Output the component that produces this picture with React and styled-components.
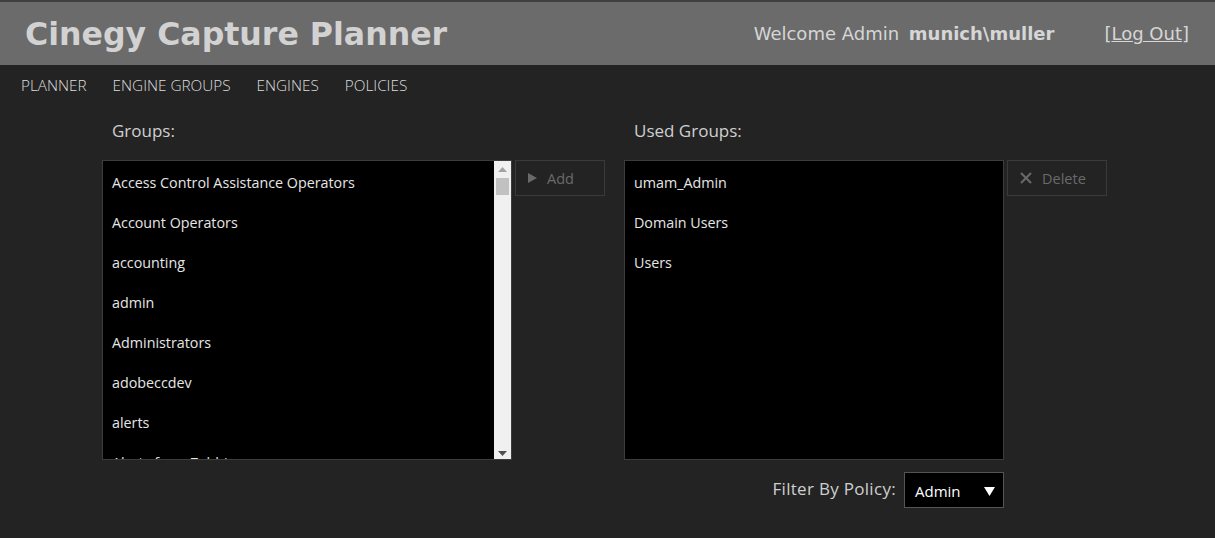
import styled, { createGlobalStyle } from 'styled-components';

const groups = [
  'Access Control Assistance Operators',
  'Account Operators',
  'accounting',
  'admin',
  'Administrators',
  'adobeccdev',
  'alerts',
  'Alerts from Zabbix',
];

const usedGroups = ['umam_Admin', 'Domain Users', 'Users'];

const GlobalStyle = createGlobalStyle`
  html, body {
    margin: 0;
    padding: 0;
    background: #232323;
    overflow: hidden;
  }
`;

export default function App() {
  return (
    <Page>
      <GlobalStyle />
      <Header>
        <Title>Cinegy Capture Planner</Title>
        <UserInfo>
          Welcome Admin <UserName>munich\muller</UserName>
        </UserInfo>
        <LogOut>
          [<LogOutLink href="#">Log Out</LogOutLink>]
        </LogOut>
      </Header>
      <Nav>
        <NavItem>PLANNER</NavItem>
        <NavItem>ENGINE GROUPS</NavItem>
        <NavItem>ENGINES</NavItem>
        <NavItem>POLICIES</NavItem>
      </Nav>
      <Main>
        <Column>
          <Label>Groups:</Label>
          <Row>
            <ListBox $width={410}>
              <Items>
                {groups.map((g) => (
                  <Item key={g}>{g}</Item>
                ))}
              </Items>
              <Scrollbar>
                <ScrollArrow viewBox="0 0 9 5">
                  <path d="M0 5 L4.5 0 L9 5 Z" fill="#a3a3a3" />
                </ScrollArrow>
                <Thumb />
                <Spacer />
                <ScrollArrow viewBox="0 0 9 5">
                  <path d="M0 0 L4.5 5 L9 0 Z" fill="#505050" />
                </ScrollArrow>
              </Scrollbar>
            </ListBox>
            <ActionButton $width={90}>
              <svg width="9" height="10" viewBox="0 0 9 10">
                <path d="M0 0 L9 5 L0 10 Z" fill="#6a6a6a" />
              </svg>
              Add
            </ActionButton>
          </Row>
        </Column>
        <Column>
          <Label>Used Groups:</Label>
          <Row>
            <ListBox $width={380}>
              <Items>
                {usedGroups.map((g) => (
                  <Item key={g}>{g}</Item>
                ))}
              </Items>
            </ListBox>
            <ActionButton $width={100}>
              <svg width="12" height="12" viewBox="0 0 12 12">
                <path d="M1 1 L11 11 M11 1 L1 11" stroke="#6a6a6a" strokeWidth="2" />
              </svg>
              Delete
            </ActionButton>
          </Row>
          <FilterRow>
            <FilterLabel>Filter By Policy:</FilterLabel>
            <Select>
              Admin
              <svg width="11" height="9" viewBox="0 0 11 9">
                <path d="M0 0 L11 0 L5.5 9 Z" fill="#ffffff" />
              </svg>
            </Select>
          </FilterRow>
        </Column>
      </Main>
    </Page>
  );
}

// Styled Components
const Page = styled.div`
  width: 1215px;
  height: 538px;
  background: #232323;
  font-family: 'Open Sans', 'Noto Sans', sans-serif;
`;

const Header = styled.header`
  height: 63px;
  border-top: 2px solid #3f3f3f;
  background: #6b6b6b;
  display: flex;
  align-items: center;
  padding: 0 26px 0 25px;
`;

const Title = styled.h1`
  margin: 0;
  flex: 1;
  font-family: 'DejaVu Sans', Verdana, sans-serif;
  font-weight: bold;
  font-size: 31.6px;
  color: #d2d2d2;
`;

const UserInfo = styled.div`
  font-family: 'DejaVu Sans', Verdana, sans-serif;
  font-size: 18px;
  color: #d6d6d6;
  margin-right: 50px;
`;

const UserName = styled.b`
  margin-left: 4px;
`;

const LogOut = styled.div`
  font-family: 'DejaVu Sans', Verdana, sans-serif;
  font-size: 18px;
  color: #d6d6d6;
`;

const LogOutLink = styled.a`
  color: #d6d6d6;
  text-decoration: underline;
`;

const Nav = styled.nav`
  display: flex;
  gap: 26px;
  padding: 0 21px;
  height: 40px;
  align-items: center;
`;

const NavItem = styled.span`
  font-size: 15.3px;
  font-weight: 300;
  color: #dcdcdc;
`;

const Main = styled.main`
  display: flex;
  gap: 19px;
  padding-left: 102px;
`;

const Column = styled.div`
  display: flex;
  flex-direction: column;
`;

const Label = styled.div`
  font-size: 17px;
  color: #cfcfcf;
  padding-left: 10px;
  height: 55px;
  line-height: 52px;
`;

const Row = styled.div`
  display: flex;
  align-items: flex-start;
  gap: 3px;
`;

const ListBox = styled.div`
  width: ${(p) => p.$width}px;
  height: 300px;
  box-sizing: border-box;
  background: #000;
  border: 1px solid #3c3c3c;
  display: flex;
  overflow: hidden;
`;

const Items = styled.div`
  flex: 1;
  padding-top: 2px;
  overflow: hidden;
`;

const Item = styled.div`
  height: 40px;
  line-height: 40px;
  padding-left: 9px;
  font-size: 14.3px;
  color: #e6e6e6;
  white-space: nowrap;
`;

const Scrollbar = styled.div`
  width: 17px;
  background: #f0f0f0;
  display: flex;
  flex-direction: column;
  align-items: center;
  padding: 6px 0 3px;
  box-sizing: border-box;
`;

const ScrollArrow = styled.svg`
  width: 9px;
  height: 5px;
`;

const Thumb = styled.div`
  width: 13px;
  height: 17px;
  margin-top: 6px;
  background: #c1c1c1;
`;

const Spacer = styled.div`
  flex: 1;
`;

const ActionButton = styled.button`
  width: ${(p) => p.$width}px;
  height: 36px;
  box-sizing: border-box;
  background: #232323;
  border: 1px solid #3a3a3a;
  color: #6a6a6a;
  font-family: 'Open Sans', 'Noto Sans', sans-serif;
  font-size: 14.5px;
  display: flex;
  align-items: center;
  gap: 10px;
  padding: 0 0 0 12px;
`;

const FilterRow = styled.div`
  display: flex;
  justify-content: flex-end;
  align-items: center;
  gap: 8px;
  margin-top: 12px;
  width: 380px;
`;

const FilterLabel = styled.span`
  font-size: 17px;
  letter-spacing: 0.3px;
  color: #cfcfcf;
  padding-bottom: 4px;
`;

const Select = styled.div`
  width: 100px;
  height: 36px;
  box-sizing: border-box;
  background: #000;
  border: 1px solid #555;
  color: #fff;
  font-size: 15px;
  display: flex;
  align-items: center;
  justify-content: space-between;
  padding: 2px 8px 0 10px;
`;
